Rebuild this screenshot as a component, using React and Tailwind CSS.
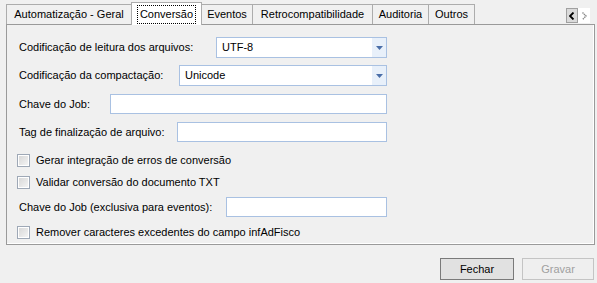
import React from 'react';

// Aba do TabControl
function Tab({ label, width, selected = false }) {
  if (selected) {
    return (
      <div
        className="relative z-10 -ml-px flex h-[23px] shrink-0 items-start justify-center border border-b-0 border-[#acacac] bg-white pt-[2px]"
        style={{ width }}
      >
        <span className="flex h-[19px] items-center border border-dotted border-black px-[2px] leading-none">{label}</span>
      </div>
    );
  }
  return (
    <div
      className="mb-px -ml-px flex h-[20px] shrink-0 items-center justify-center border border-b-0 border-[#acacac] bg-[#f0f0f0] first:ml-[6px]"
      style={{ width }}
    >
      {label}
    </div>
  );
}

function Combo({ value, width }) {
  return (
    <div className="flex h-[21px] shrink-0 items-stretch border border-[#a9c1e2] bg-white" style={{ width }}>
      <div className="flex flex-1 items-center pl-[5px]">{value}</div>
      <div className="flex w-[14px] items-center justify-center bg-[#e8f0fa]">
        <svg width="7" height="4" viewBox="0 0 7 4">
          <path d="M0 0h7L3.5 4z" fill="#4a6ea8" />
        </svg>
      </div>
    </div>
  );
}

function TextBox({ width }) {
  return <div className="h-[20px] shrink-0 border border-[#a9c1e2] bg-white" style={{ width }} />;
}

function Check({ label }) {
  return (
    <div className="flex h-[13px] items-center pl-[10px]">
      <div className="h-[13px] w-[13px] shrink-0 border border-[#9ea8b6] bg-white p-px">
        <div className="h-full w-full bg-gradient-to-br from-[#d8d8d8] to-[#f4f4f4]" />
      </div>
      <span className="ml-[6px] whitespace-nowrap">{label}</span>
    </div>
  );
}

function Field({ label, labelWidth, children }) {
  return (
    <div className="flex items-center pl-[12px]">
      <span className="shrink-0 whitespace-nowrap" style={{ width: labelWidth }}>{label}</span>
      {children}
    </div>
  );
}

export default function App() {
  return (
    <div
      className="h-[283px] w-[597px] overflow-hidden bg-[#f0f0f0] text-[11px] text-black"
      style={{ fontFamily: '"Liberation Sans", Arial, sans-serif' }}
    >
      {/* cabeçalho das abas */}
      <div className="flex h-[25px] items-end">
        <Tab label="Automatização - Geral" width={126} />
        <Tab label="Conversão" width={71} selected />
        <Tab label="Eventos" width={52} />
        <Tab label="Retrocompatibilidade" width={121} />
        <Tab label="Auditoria" width={57} />
        <Tab label="Outros" width={47} />
        <div className="ml-auto mr-[7px] flex h-[15px] self-start mt-[8px]">
          <div className="flex w-[12px] items-center justify-center border border-[#a0a0a0] bg-[#dadada]">
            <svg width="6" height="8" viewBox="0 0 6 8">
              <path d="M4.5 0.5L1 4l3.5 3.5" stroke="#000" strokeWidth="1.8" fill="none" />
            </svg>
          </div>
          <div className="flex w-[12px] items-center justify-center bg-white">
            <svg width="6" height="8" viewBox="0 0 6 8">
              <path d="M1.5 0.5L5 4 1.5 7.5" stroke="#8a8a8a" strokeWidth="1.4" fill="none" strokeDasharray="1.4 0.6" />
            </svg>
          </div>
        </div>
      </div>

      {/* painel */}
      <div className="-mt-px ml-[6px] box-border flex h-[221px] w-[589px] flex-col border border-[#9a9a9a] bg-[#f0f0f0] shadow-[inset_-1px_-1px_0_#fff]">
        <div className="mt-[12px]">
          <Field label="Codificação de leitura dos arquivos:" labelWidth={197}>
            <Combo value="UTF-8" width={171} />
          </Field>
        </div>
        <div className="mt-[7px]">
          <Field label="Codificação da compactação:" labelWidth={160}>
            <Combo value="Unicode" width={208} />
          </Field>
        </div>
        <div className="mt-[8px]">
          <Field label="Chave do Job:" labelWidth={91}>
            <TextBox width={277} />
          </Field>
        </div>
        <div className="mt-[8px]">
          <Field label="Tag de finalização de arquivo:" labelWidth={158}>
            <TextBox width={210} />
          </Field>
        </div>
        <div className="mt-[12px]">
          <Check label="Gerar integração de erros de conversão" />
        </div>
        <div className="mt-[9px]">
          <Check label="Validar conversão do documento TXT" />
        </div>
        <div className="mt-[8px]">
          <Field label="Chave do Job (exclusiva para eventos):" labelWidth={207}>
            <TextBox width={161} />
          </Field>
        </div>
        <div className="mt-[9px]">
          <Check label="Remover caracteres excedentes do campo infAdFisco" />
        </div>
      </div>

      {/* botões */}
      <div className="mr-[3px] mt-[13px] flex justify-end gap-[8px]">
        <button className="flex h-[22px] w-[74px] items-center justify-center border border-[#7a7a7a] bg-[#e1e1e1]">
          Fechar
        </button>
        <button className="flex h-[22px] w-[72px] items-center justify-center border border-[#c4c4c4] bg-[#efefef] text-[#a0a0a0]">
          Gravar
        </button>
      </div>
    </div>
  );
}
